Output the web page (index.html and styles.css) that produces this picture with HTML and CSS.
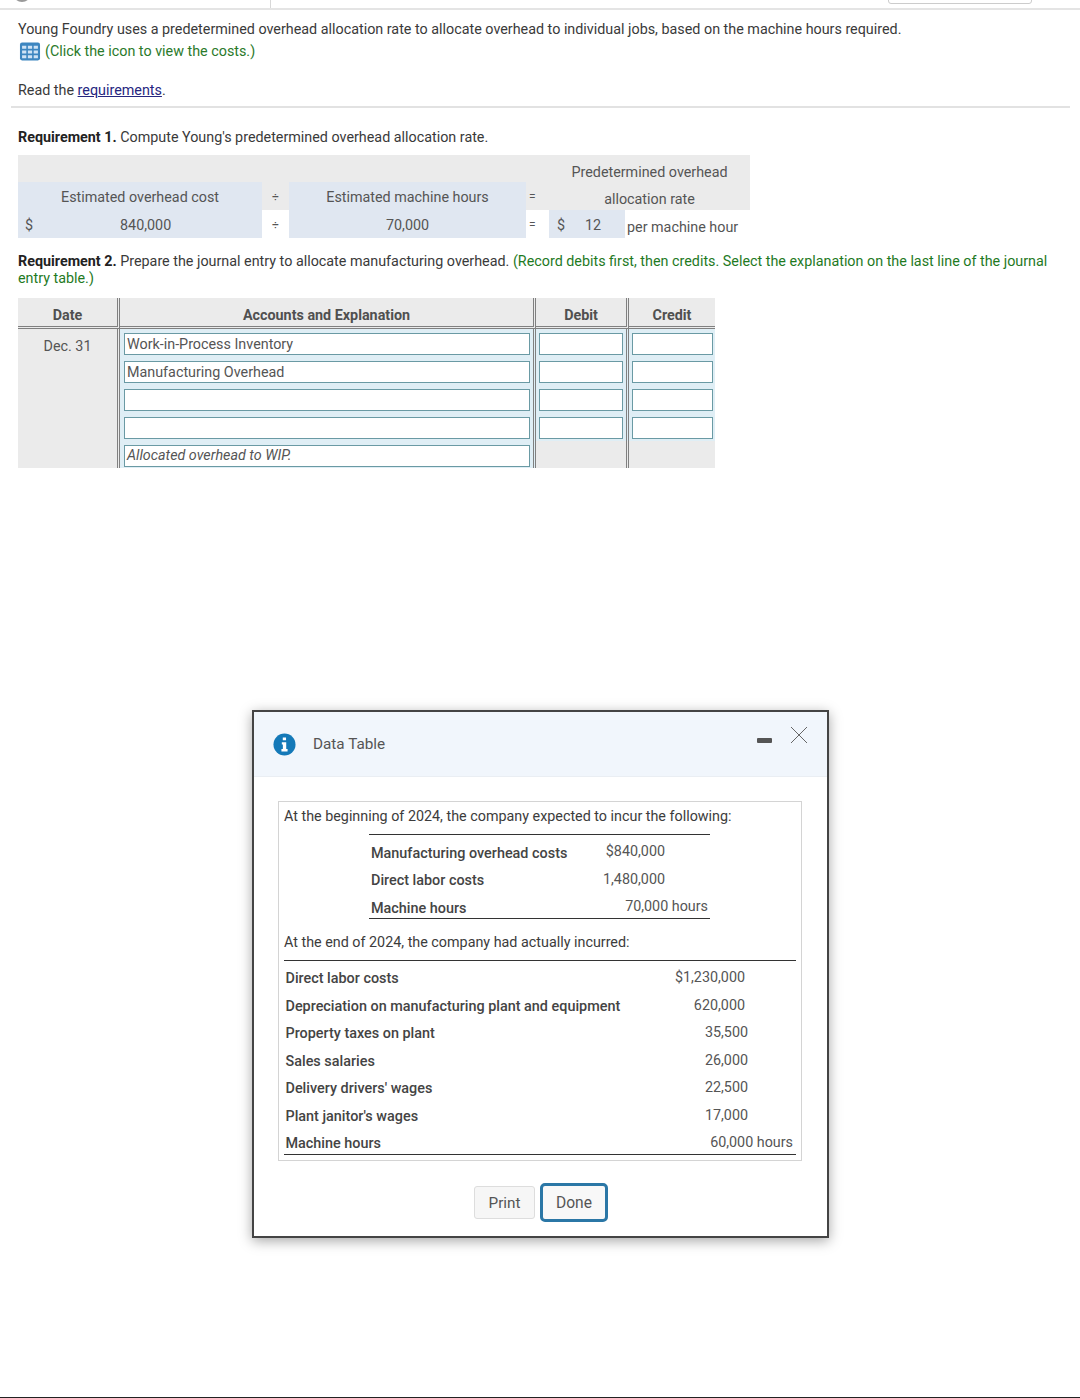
FILE: index.html
```html
<!DOCTYPE html>
<html lang="en">
<head>
<meta charset="utf-8">
<title>Young Foundry</title>
<link rel="stylesheet" href="styles.css">
</head>
<body>
<header class="topbar">
  <div class="top-left"><span class="top-circle"></span></div>
  <div class="top-mid"><span class="top-button"></span></div>
</header>
<main class="page">
  <p class="intro">Young Foundry uses a predetermined overhead allocation rate to allocate overhead to individual jobs, based on the machine hours required.</p>
  <p class="hint">
    <svg class="grid-icon" viewBox="0 0 20 18" width="22" height="19" aria-hidden="true">
      <rect x="0.5" y="0.5" width="19" height="17" rx="2" fill="#3d86c0"/>
      <path fill="#cfe3f5" d="M2.5 3.5h4v3h-4zM8 3.5h4v3H8zM13.5 3.5h4v3h-4zM2.5 8h4v3h-4zM8 8h4v3H8zM13.5 8h4v3h-4zM2.5 12.5h4v3h-4zM8 12.5h4v3H8zM13.5 12.5h4v3h-4z"/>
    </svg>
    <span>(Click the icon to view the costs.)</span>
  </p>
  <p class="read">Read the <a class="link" href="#">requirements</a>.</p>
  <hr class="rule">
  <p class="req1"><b>Requirement 1.</b> Compute Young's predetermined overhead allocation rate.</p>

  <div class="rate">
    <div class="c g"></div><div class="c g"></div><div class="c g"></div><div class="c g"></div>
    <div class="c g result top">Predetermined overhead</div>
    <div class="c b">Estimated overhead cost</div><div class="c g op">÷</div>
    <div class="c b">Estimated machine hours</div><div class="c g op eq">=</div>
    <div class="c g result low">allocation rate</div>
    <div class="c b money"><span class="sign">$</span><span class="amt1">840,000</span></div><div class="c op">÷</div>
    <div class="c b">70,000</div><div class="c op eq">=</div>
    <div class="c b answer"><span>$</span><span class="amt2">12</span></div>
    <div class="c per">per machine hour</div>
  </div>

  <p class="req2"><b>Requirement 2.</b> Prepare the journal entry to allocate manufacturing overhead. <span class="green">(Record debits first, then credits. Select the explanation on the last line of the journal entry table.)</span></p>

  <div class="journal">
    <div class="jh">Date</div><div class="jh">Accounts and Explanation</div><div class="jh">Debit</div><div class="jh">Credit</div>
    <div class="jd date">Dec. 31</div><div class="jd"><div class="in">Work-in-Process Inventory</div></div><div class="jd"><div class="in"></div></div><div class="jd"><div class="in"></div></div>
    <div class="jd"></div><div class="jd"><div class="in">Manufacturing Overhead</div></div><div class="jd"><div class="in"></div></div><div class="jd"><div class="in"></div></div>
    <div class="jd"></div><div class="jd"><div class="in"></div></div><div class="jd"><div class="in"></div></div><div class="jd"><div class="in"></div></div>
    <div class="jd"></div><div class="jd"><div class="in"></div></div><div class="jd"><div class="in"></div></div><div class="jd"><div class="in"></div></div>
    <div class="jd"></div><div class="jd"><div class="in em">Allocated overhead to WIP.</div></div><div class="jd blank"></div><div class="jd blank"></div>
  </div>
</main>

<section class="dialog">
  <div class="dlg-head">
    <svg class="info" viewBox="0 0 24 24" width="23" height="23" aria-hidden="true">
      <circle cx="12" cy="12" r="11.5" fill="#1479b8"/>
      <path fill="#fff" d="M10.2 4.6h3.4v3h-3.4zM9.2 9.6h4.6v7.2h1.4v2.4H8.8v-2.4h1.5v-4.8H9.2z"/>
    </svg>
    <span class="dlg-title">Data Table</span>
    <span class="minimize"></span>
    <svg class="close" viewBox="0 0 18 18" width="18" height="18" aria-hidden="true">
      <path d="M1 1l16 16M17 1L1 17" stroke="#666" stroke-width="1" fill="none"/>
    </svg>
  </div>
  <div class="dlg-body">
    <div class="databox">
      <p class="para first">At the beginning of 2024, the company expected to incur the following:</p>
      <div class="t1">
        <div class="r"><b>Manufacturing overhead costs</b><span class="v1">$840,000</span></div>
        <div class="r"><b>Direct labor costs</b><span class="v1">1,480,000</span></div>
        <div class="r"><b>Machine hours</b><span class="v1h">70,000 hours</span></div>
      </div>
      <p class="para second">At the end of 2024, the company had actually incurred:</p>
      <div class="t2">
        <div class="r2"><b>Direct labor costs</b><span class="v2">$1,230,000</span></div>
        <div class="r2"><b>Depreciation on manufacturing plant and equipment</b><span class="v2">620,000</span></div>
        <div class="r2"><b>Property taxes on plant</b><span class="v3">35,500</span></div>
        <div class="r2"><b>Sales salaries</b><span class="v3">26,000</span></div>
        <div class="r2"><b>Delivery drivers' wages</b><span class="v3">22,500</span></div>
        <div class="r2"><b>Plant janitor's wages</b><span class="v3">17,000</span></div>
        <div class="r2"><b>Machine hours</b><span class="v2h">60,000 hours</span></div>
      </div>
    </div>
    <div class="actions">
      <button class="btn print" type="button">Print</button>
      <button class="btn done" type="button">Done</button>
    </div>
  </div>
</section>
<div class="bottom-line"></div>
</body>
</html>
```
FILE: styles.css
```css
* { box-sizing: border-box; }
html, body { margin: 0; padding: 0; }
body {
  width: 1080px;
  height: 1398px;
  position: relative;
  overflow: hidden;
  background: #fff;
  font-family: Roboto, "Liberation Sans", sans-serif;
  font-size: 14.33px;
  color: #404040;
}
p { margin: 0; }
b { font-weight: 500; }

.topbar {
  height: 10px;
  display: flex;
  border-bottom: 2px solid #e4e4e4;
  overflow: hidden;
}
.top-left { width: 271px; border-right: 1px solid #d8d8d8; position: relative; }
.top-circle {
  position: absolute;
  left: 12px;
  top: -20px;
  width: 20px;
  height: 22px;
  border-radius: 50%;
  border: 2px solid #999;
}
.top-mid { flex: 1; position: relative; }
.top-button {
  position: absolute;
  left: 617px;
  top: -10px;
  width: 144px;
  height: 14px;
  border: 1px solid #ccc;
  border-radius: 3px;
}

.page { padding: 0 10px 0 18px; }
.intro { padding-top: 10px; line-height: 18px; color: #3a3a3a; }
.hint { display: flex; align-items: center; height: 22px; margin: 2px 0 0 1px; gap: 4px; color: #2b7a2b; }
.grid-icon { display: block; }
.read { margin-top: 19px; line-height: 18px; color: #3a3a3a; }
.link { color: #26267f; text-decoration: underline; }
.rule { margin: 7px 0 0 -7px; border: 0; height: 2px; background: #e2e2e2; }
.req1 { margin-top: 20px; line-height: 18px; color: #3a3a3a; }
.req1 b, .req2 b { color: #222; font-weight: 700; }

.rate {
  margin-top: 9px;
  width: 732px;
  display: grid;
  grid-template-columns: 244px 27px 237px 23px 76px 125px;
  grid-template-rows: 27px 28px 28px;
  color: #555;
}
.c { display: flex; align-items: center; justify-content: center; padding-top: 2px; }
.g { background: #ebebeb; }
.b { background: #e0e7f1; }
.op { font-size: 12px; color: #555; }
.eq { justify-content: flex-start; padding-left: 3px; }
.result { grid-column: span 2; }
.top { padding-top: 6px; }
.low { padding-top: 5px; }
.money, .answer { justify-content: flex-start; }
.money { padding-left: 7px; }
.answer { padding-left: 8px; gap: 20px; }
.amt1 { margin-left: 87px; }
.per { justify-content: flex-start; padding: 5px 0 0 2px; white-space: nowrap; }

.req2 { margin-top: 15px; line-height: 17px; width: 1040px; color: #3a3a3a; }
.green { color: #1f7a1f; }

.journal {
  margin-top: 11px;
  width: 697px;
  display: grid;
  grid-template-columns: 102px 416px 93px 86px;
  grid-template-rows: 31px 28px 28px 27.5px 28px 27.5px;
  background: #ebebeb;
}
.jh {
  display: flex;
  align-items: center;
  justify-content: center;
  padding-top: 5px;
  font-weight: 700;
  color: #505050;
  border-bottom: 3px double #808080;
  border-right: 3px double #808080;
}
.jh:nth-child(4n) { border-right: 0; }
.jd {
  padding: 4px 3px 2px 3px;
  border-right: 3px double #808080;
  background: #dfeef5;
}
.jd:nth-child(4n) { border-right: 0; padding-right: 2px; }
.jd:nth-child(4n+1) { background: #ebebeb; border-right: 3px double #808080; }
.jd:nth-child(4n+2) { padding-left: 4px; }
.jd.blank { background: #ebebeb; }
.date { text-align: center; padding-top: 9px; color: #555; }
.in {
  height: 22px;
  background: #fff;
  border: 1.5px solid #6a9aa4;
  padding-left: 2px;
  line-height: 20px;
  color: #555;
  white-space: nowrap;
}
.em { font-style: italic; line-height: 19px; }

.dialog {
  position: absolute;
  left: 252px;
  top: 710px;
  width: 577px;
  height: 528px;
  background: #fff;
  border: 2px solid #444;
  box-shadow: 0 3px 12px rgba(0, 0, 0, 0.35);
}
.dlg-head {
  height: 65px;
  background: #f1f6fc;
  border-bottom: 1px solid #eaeef3;
  display: flex;
  align-items: center;
  padding-left: 19px;
  position: relative;
}
.info { display: block; }
.dlg-title { margin-left: 17px; font-size: 15.3px; color: #555; }
.minimize {
  position: absolute;
  left: 503px;
  top: 26px;
  width: 15px;
  height: 5px;
  background: #555;
  border-radius: 1px;
}
.close { position: absolute; left: 536px; top: 14px; }
.dlg-body { padding: 24px 25px 0 24px; }
.databox {
  height: 360px;
  border: 1px solid #d4d4d4;
  padding: 0 5px;
  position: relative;
  color: #3c3c3c;
}
.para { line-height: 18px; }
.first { padding-top: 5px; }
.t1 {
  margin: 9px 0 0 85px;
  width: 341px;
  height: 85px;
  border-top: 1px solid #333;
  border-bottom: 1px solid #333;
  padding-top: 3px;
}
.r, .r2 { position: relative; height: 27.5px; line-height: 27.5px; }
.r { padding: 1.5px 0 0 2px; }
.r2 { padding: 1px 0 0 1.5px; }
.r b, .r2 b { color: #444; font-size: 14.4px; }
.v1, .v1h, .v2, .v2h, .v3 { position: absolute; top: 0; color: #555; }
.v1 { right: 45px; }
.v1h { right: 2px; }
.second { margin-top: 14px; }
.t2 {
  margin: 9px 0 0 0;
  width: 512px;
  height: 195px;
  border-top: 1px solid #333;
  border-bottom: 1px solid #333;
  padding-top: 3px;
}
.v2 { right: 51px; }
.v3 { right: 48px; }
.v2h { right: 3px; }
.actions {
  margin-top: 22px;
  display: flex;
  justify-content: center;
  align-items: center;
  gap: 5px;
  padding-left: 2px;
}
.btn {
  font: inherit;
  color: #555;
  background: #f6f6f6;
  border: 1px solid #ddd;
  border-radius: 3px;
  padding: 1px 0 0;
}
.print { width: 61px; height: 33px; font-size: 15.3px; }
.done { width: 68px; height: 39px; font-size: 15.6px; background: #f8f8f8; border: 3px solid #2b77a6; border-radius: 5px; }
.bottom-line {
  position: absolute;
  left: 0;
  right: 0;
  bottom: 0;
  height: 1px;
  background: #222;
}
```
